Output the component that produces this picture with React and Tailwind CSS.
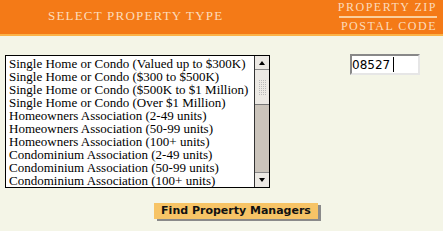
import React from 'react';

const types = [
  'Single Home or Condo (Valued up to $300K)',
  'Single Home or Condo ($300 to $500K)',
  'Single Home or Condo ($500K to $1 Million)',
  'Single Home or Condo (Over $1 Million)',
  'Homeowners Association (2-49 units)',
  'Homeowners Association (50-99 units)',
  'Homeowners Association (100+ units)',
  'Condominium Association (2-49 units)',
  'Condominium Association (50-99 units)',
  'Condominium Association (100+ units)',
];

const serif = { fontFamily: '"Liberation Serif", "Times New Roman", serif' };

function Scrollbar() {
  return (
    <div className="flex h-full w-[15px] flex-col border-l border-[#333]">
      <div className="flex h-[14px] items-center justify-center border-b border-[#888] bg-[#ece9e4]">
        <div className="h-0 w-0 border-x-[3px] border-b-[4px] border-x-transparent border-b-black" />
      </div>
      <div className="flex h-[35px] items-center justify-center border-b border-[#777] bg-[#ece9e4]">
        <div className="grid grid-cols-4 gap-[1px]">
          {Array.from({ length: 32 }).map((_, i) => (
            <div key={i} className="h-[1px] w-[1px] bg-[#bbb]" />
          ))}
        </div>
      </div>
      <div className="flex-1 bg-[#cbc4bb]" />
      <div className="flex h-[15px] items-center justify-center border-t border-[#888] bg-[#ece9e4]">
        <div className="h-0 w-0 border-x-[3px] border-t-[4px] border-x-transparent border-t-black" />
      </div>
    </div>
  );
}

export default function App() {
  return (
    <div className="h-[231px] w-[443px] overflow-hidden bg-[#f4f5e7]">
      <div className="flex h-[34px] items-start justify-between bg-[#f47a17] text-[#fcdcbc]" style={serif}>
        <div className="pl-[48px] pt-[9px] text-[13px] leading-[14px] tracking-[1.2px]">SELECT PROPERTY TYPE</div>
        <div className="flex flex-col items-end pr-[6px] pt-[1px] text-[12px] leading-[12px] tracking-[1.5px]">
          <span className="whitespace-nowrap">PROPERTY ZIP</span>
          <div className="mt-[3px] h-[2px] w-[98px] bg-[#fbcf9e]" />
          <span className="mt-[2px] whitespace-nowrap">POSTAL CODE</span>
        </div>
      </div>
      <div className="h-[2px] bg-[#fbb348]" />

      <div className="flex items-start pl-[5px] pt-[18px]">
        <div className="mt-[1px] flex h-[133px] w-[265px] border border-black bg-white">
          <div className="flex-1 pl-[3px] pt-[1px] text-[13px] leading-[13px] text-black" style={serif}>
            {types.map((t) => (
              <div key={t} className="h-[13px] whitespace-nowrap">{t}</div>
            ))}
          </div>
          <Scrollbar />
        </div>
        <div className="ml-[80px] flex h-[21px] w-[70px] items-center border-2 border-r-[#e6e6e6] border-b-[#e6e6e6] border-l-[#888] border-t-[#888] bg-white text-[12px] text-black" style={{ fontFamily: '"DejaVu Sans", Verdana, sans-serif' }}>
          <span>08527</span>
          <span className="ml-[3px] h-[15px] w-[1px] bg-black" />
        </div>
      </div>

      <div className="flex pl-[154px] pt-[15px]">
        <button className="h-[16px] w-[164px] bg-[#f7c466] text-[11px] font-bold leading-[16px] text-[#111] shadow-[3px_2px_0_#8a8a8a]" style={{ fontFamily: '"DejaVu Sans", Verdana, sans-serif' }}>
          Find Property Managers
        </button>
      </div>
    </div>
  );
}
